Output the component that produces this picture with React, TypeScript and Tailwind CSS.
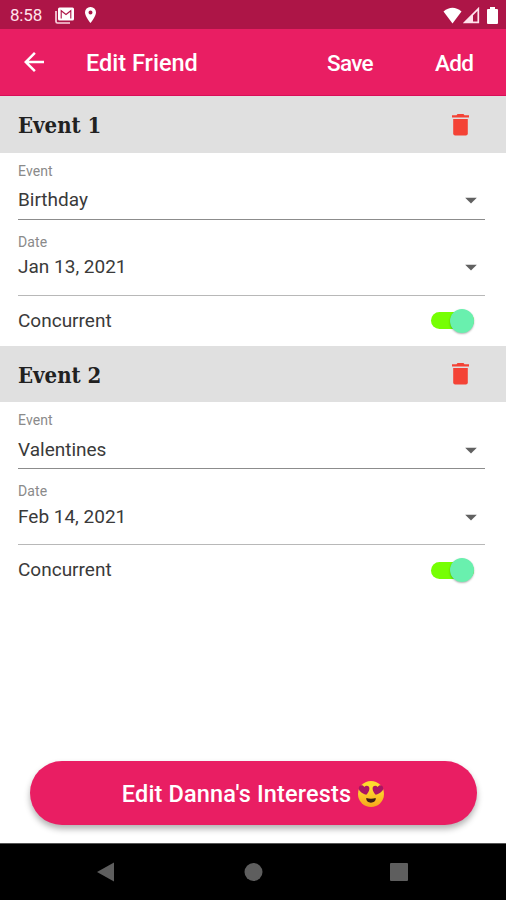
import React, { useState } from "react";
import { MdArrowBack, MdArrowDropDown } from "react-icons/md";

interface FriendEvent {
  id: number;
  name: string;
  date: string;
  concurrent: boolean;
}

const initialEvents: FriendEvent[] = [
  { id: 1, name: "Birthday", date: "Jan 13, 2021", concurrent: true },
  { id: 2, name: "Valentines", date: "Feb 14, 2021", concurrent: true },
];

function StatusBar() {
  return (
    <div className="flex h-[29px] shrink-0 items-center justify-between bg-[#ad1547] pt-px pr-[8px] pl-[10px] text-white">
      <div className="flex items-center">
        <span className="w-[45px] text-[17px] leading-none tracking-[-0.2px] text-[#ffe3ec]">
          8:58
        </span>
        <svg width="19" height="17" viewBox="0 0 19 17" fill="none">
          <path d="M1 4v10.5q0 1.5 1.500 1.500H15" stroke="#fbd3df" strokeWidth="1.700" />
          <rect x="3" y="0.500" width="16" height="13" rx="1.500" fill="#fff" />
          <path d="M6.200 11.500V3.700l4.800 3.800 4.800-3.800v7.800" stroke="#ad1547" strokeWidth="1.100" />
        </svg>
        <svg className="ml-[11px]" width="11" height="16" viewBox="0 0 11 16">
          <path
            d="M5.500 0A5.400 5.400 0 0 0 0 5.500C0 9.500 5.500 16 5.500 16S11 9.500 11 5.500A5.400 5.400 0 0 0 5.500 0zm0 3.500a2 2 0 1 1 0 4 2 2 0 0 1 0-4z"
            fill="#fff"
          />
        </svg>
      </div>
      <div className="flex items-center">
        <svg width="19" height="17" viewBox="0 0 19 17" fill="#fff">
          <path d="M.5 4.500Q9.500-3 18.500 4.500L9.500 16.500z" />
        </svg>
        <svg className="ml-px" width="17" height="17" viewBox="0 0 17 17">
          <path d="M1.800 15.300L15.300 1.800v13.500z" fill="none" stroke="#ffe3ec" strokeWidth="1.700" />
          <path d="M1 16L10 7v9z" fill="#ffe3ec" />
        </svg>
        <svg className="ml-[7px]" width="11" height="17" viewBox="0 0 11 17" fill="#fff">
          <path d="M3 0h5v2h2q1 0 1 1v13q0 1-1 1H1q-1 0-1-1V3q0-1 1-1h2z" />
        </svg>
      </div>
    </div>
  );
}

function AppBar({ onAdd }: { onAdd: () => void }) {
  return (
    <header className="flex h-[67px] shrink-0 items-center border-b border-[#d80e58] bg-[#e91e63] pl-[19px] text-[22.5px] font-medium text-white">
      <button type="button" aria-label="Back">
        <MdArrowBack className="h-[30px] w-[30px]" />
      </button>
      <h1 className="ml-[37px] w-[241px] pt-[3px] text-[23.5px]">Edit Friend</h1>
      <button type="button" className="w-[108px] pt-[3px] text-left tracking-[-0.7px]">
        Save
      </button>
      <button type="button" onClick={onAdd} className="pt-[3px] tracking-[-0.7px]">
        Add
      </button>
    </header>
  );
}

function TrashIcon() {
  return (
    <svg width="17" height="22" viewBox="0 0 17 22" fill="#f44336">
      <path d="M0 1.200h4.500L5.500 0h6l1 1.200H17v2.300H0z" />
      <path d="M1.200 5h14.600v14.500q0 2-2 2H3.200q-2 0-2-2z" />
    </svg>
  );
}

function Toggle({ on, onClick }: { on: boolean; onClick: () => void }) {
  return (
    <button
      type="button"
      role="switch"
      aria-checked={on}
      aria-label="Concurrent"
      onClick={onClick}
      className={`mr-[11.5px] flex h-[17px] w-[42.5px] items-center rounded-full ${
        on ? "justify-end bg-[#76ff03]" : "justify-start bg-[#bdbdbd]"
      }`}
    >
      <span
        className={`h-6 w-6 shrink-0 rounded-full shadow-[0_1px_2px_rgba(0,0,0,0.3)] ${
          on ? "bg-[#69f0ae]" : "bg-[#fafafa]"
        }`}
      />
    </button>
  );
}

interface EventSectionProps {
  event: FriendEvent;
  index: number;
  onDelete: () => void;
  onToggle: () => void;
}

function EventSection({ event, index, onDelete, onToggle }: EventSectionProps) {
  return (
    <section className="h-[249.5px]">
      <div className="flex h-[56.5px] items-center justify-between bg-[#e0e0e0] pr-[37px] pl-[18px]">
        <h2 className="pt-[3px] font-['DejaVu_Serif_Condensed','DejaVu_Serif',serif] text-[22px] font-bold text-[#212121] [font-stretch:condensed]">
          Event {index + 1}
        </h2>
        <button type="button" aria-label="Delete event" onClick={onDelete} className="pt-px">
          <TrashIcon />
        </button>
      </div>

      <div className="pr-[21px] pl-[18px]">
        <div className="flex h-[67px] flex-col border-b-[1.5px] border-[#8c8c8c] pt-[10px]">
          <span className="text-[14px] leading-4 tracking-[0.1px] text-[#8a8a8a]">Event</span>
          <div className="mt-2 flex h-[28px] items-center justify-between">
            <span className="text-[19px] text-[#3a3a3a]">{event.name}</span>
            <MdArrowDropDown className="-mt-px h-[28px] w-[28px] text-[#616161]" />
          </div>
        </div>
        <div className="flex h-[76px] flex-col border-b-[1.5px] border-[#b8b8b8] pt-[14px]">
          <span className="text-[14px] leading-4 tracking-[0.1px] text-[#8a8a8a]">Date</span>
          <div className="mt-[3.5px] flex h-[28px] items-center justify-between">
            <span className="pt-px text-[19px] text-[#3a3a3a]">{event.date}</span>
            <MdArrowDropDown className="h-[28px] w-[28px] text-[#616161]" />
          </div>
        </div>
        <div className="flex h-[50px] items-center justify-between">
          <span className="pt-px text-[19px] text-[#3a3a3a]">Concurrent</span>
          <Toggle on={event.concurrent} onClick={onToggle} />
        </div>
      </div>
    </section>
  );
}

function HeartEyes() {
  return (
    <svg width="28" height="28" viewBox="0 0 28 28" role="img" aria-label="Heart eyes">
      <defs>
        <linearGradient id="face" x1="0" y1="0" x2="0" y2="1">
          <stop offset="0.3" stopColor="#fddb2f" />
          <stop offset="1" stopColor="#f7a51c" />
        </linearGradient>
      </defs>
      <circle cx="14" cy="14" r="13" fill="url(#face)" />
      <path
        d="M9.300 14.800C4.500 13.500 1.500 10.500 1.800 8c.3-3 4-3.800 5.500-1 2-2.400 5.400-1.100 5.100 1.800-.2 2.200-1.500 4.300-3.100 6z"
        fill="#ab1463"
      />
      <path
        d="M18.700 14.800c4.800-1.300 7.800-4.300 7.500-6.800-.3-3-4-3.800-5.500-1-2-2.400-5.400-1.100-5.100 1.800.2 2.200 1.500 4.300 3.100 6z"
        fill="#ab1463"
      />
      <path d="M9.300 18q4.700 1.500 9.400 0c.8 6.200-10.200 6.200-9.400 0z" fill="#3b1d14" />
    </svg>
  );
}

function NavBar() {
  return (
    <nav className="flex h-[57px] shrink-0 items-center border-t border-[#555] bg-black pl-[96px]">
      <svg width="312" height="20" viewBox="0 0 312 20" fill="#5e5e5e">
        <path d="M1 10L18 0.500v19z" />
        <circle cx="157.500" cy="10" r="9" />
        <rect x="294" y="1" width="18" height="18" rx="1" />
      </svg>
    </nav>
  );
}

export default function App() {
  const [events, setEvents] = useState<FriendEvent[]>(initialEvents);

  const addEvent = () => {
    setEvents([
      ...events,
      { id: Date.now(), name: "Birthday", date: "Jan 1, 2021", concurrent: false },
    ]);
  };

  const deleteEvent = (id: number) => {
    setEvents(events.filter((e) => e.id !== id));
  };

  const toggleEvent = (id: number) => {
    setEvents(
      events.map((e) => (e.id === id ? { ...e, concurrent: !e.concurrent } : e))
    );
  };

  return (
    <div className="flex h-[900px] w-[506px] flex-col overflow-hidden bg-white font-[Roboto,sans-serif]">
      <StatusBar />
      <AppBar onAdd={addEvent} />
      <main className="min-h-0 flex-1 overflow-hidden">
        {events.map((event, index) => (
          <EventSection
            key={event.id}
            event={event}
            index={index}
            onDelete={() => deleteEvent(event.id)}
            onToggle={() => toggleEvent(event.id)}
          />
        ))}
      </main>
      <div className="shrink-0 pr-[29px] pb-[18px] pl-[30px]">
        <button
          type="button"
          className="flex h-[64px] w-full items-center justify-center gap-[6px] rounded-full bg-[#e91e63] pt-px text-[23.5px] font-medium text-white shadow-[0_4px_6px_rgba(0,0,0,0.3)]"
        >
          <span className="pt-[3px] tracking-[0.15px]">Edit Danna's Interests</span>
          <HeartEyes />
        </button>
      </div>
      <NavBar />
    </div>
  );
}
